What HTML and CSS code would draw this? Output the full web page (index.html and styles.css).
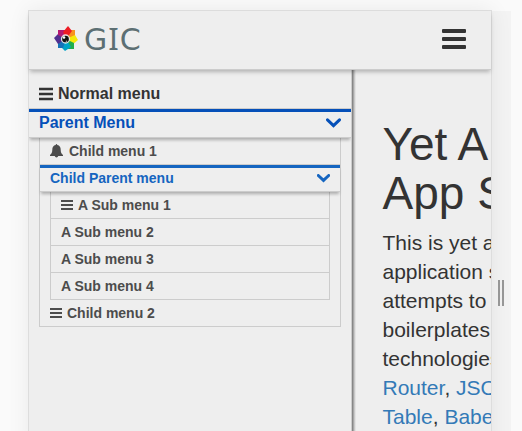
FILE: index.html
```
<!DOCTYPE html>
<html lang="en">
<head>
<meta charset="utf-8">
<title>GIC</title>
<link rel="stylesheet" href="styles.css">
</head>
<body>
<div class="stage">
  <div class="device">
    <header class="header">
      <a class="brand">
        <svg class="logo" width="25" height="26" viewBox="0 0 25 26">
          <path fill="#f7931e" d="M13 13l3-9h6v6z"/>
          <path fill="#f5e90a" d="M13 13l9-4 3 5-6 5z"/>
          <path fill="#1fad4b" d="M13 13l8 4v6h-7z"/>
          <path fill="#00a3c7" d="M13 13l5 8-6 4-5-5z"/>
          <path fill="#1672b8" d="M13 13l-3 9H5v-6z"/>
          <path fill="#50308f" d="M13 13l-8 5-4-6 5-5z"/>
          <path fill="#b51873" d="M13 13L5 9V4h7z"/>
          <path fill="#ed1c24" d="M13 13L10 6l5-6 4 5z"/>
          <circle cx="12.500" cy="13" r="4" fill="#111" stroke="#fff" stroke-opacity=".85" stroke-width="1.300"/>
          <circle cx="11" cy="11.500" r="1.300" fill="#fff"/><circle cx="13.500" cy="15.200" r=".8" fill="#aaa"/>
        </svg>
        <span class="brand-name">G<span class="serifed">I</span>C</span>
      </a>
      <span class="toggle"><i></i><i></i><i></i></span>
    </header>
    <div class="body">
      <nav class="sidebar">
        <div class="item item-top"><svg class="bars" width="14" height="12" viewBox="0 0 14 12"><path d="M0 1h14M0 6h14M0 11h14"/></svg>Normal menu</div>
        <div class="parent"><span>Parent Menu</span><svg class="chevron" width="15" height="10" viewBox="0 0 15 10"><path d="M1.500 1.800l6 5.800 6-5.800"/></svg></div>
        <div class="level">
          <div class="item item-first"><svg class="bell" width="13" height="14" viewBox="0 0 13 14"><path d="M5.700 1c0-1.300 1.600-1.300 1.600 0 2.500.5 3.400 2.300 3.400 4.700 0 2.700.8 4.100 2.300 5.300v1H8.200c-.2 1.900-3.200 1.900-3.400 0H0v-1c1.500-1.200 2.300-2.600 2.300-5.300C2.300 3.300 3.200 1.500 5.700 1z"/></svg>Child menu 1</div>
          <div class="parent parent-child"><span>Child Parent menu</span><svg class="chevron" width="13" height="9" viewBox="0 0 13 9"><path d="M1.300 1.500l5.200 4.900 5.200-4.900"/></svg></div>
          <div class="level level-sub">
            <div class="item"><svg class="bars" width="12" height="10" viewBox="0 0 12 10"><path d="M0 1h12M0 5h12M0 9h12"/></svg>A Sub menu 1</div>
            <div class="item">A Sub menu 2</div>
            <div class="item">A Sub menu 3</div>
            <div class="item">A Sub menu 4</div>
          </div>
          <div class="item item-last"><svg class="bars" width="12" height="10" viewBox="0 0 12 10"><path d="M0 1h12M0 5h12M0 9h12"/></svg>Child menu 2</div>
        </div>
      </nav>
      <main class="content">
        <h1>Yet A<br>App S</h1>
        <p>This is yet a<br>application s<br>attempts to<br>boilerplates<br>technologies<br><a>Router</a>, <a>JSON</a><br><a>Table</a>, <a>Babel</a></p>
      </main>
    </div>
  </div>
  <div class="handle"><i></i><i></i></div>
</div>
</body>
</html>
```
FILE: styles.css
```
* { box-sizing: border-box; }
body {
  margin: 0;
  height: 431px;
  overflow: hidden;
  background: #fafafa;
  color: #333;
  font-family: "Liberation Sans", Arial, sans-serif;
}
.stage { display: flex; height: 431px; padding: 10px 0 0 28px; overflow: hidden; }
.device {
  display: flex;
  flex-direction: column;
  flex: none;
  width: 464px;
  height: 440px;
  border: 1px solid #ddd;
  background: #eee;
  box-shadow: 0 0 20px rgba(0, 0, 0, .07);
  z-index: 1;
}
.header {
  display: flex;
  flex: none;
  align-items: center;
  justify-content: space-between;
  height: 59px;
  padding: 0 25px 0 24px;
  background: #eee;
  border-bottom: 1px solid #ccc;
  box-shadow: 0 3px 4px -1px rgba(0, 0, 0, .25);
  z-index: 2;
}
.brand { display: flex; align-items: center; gap: 6px; }
.logo { margin-top: -2px; }
.brand-name {
  color: #5c6f73;
  font: 30px/40px "DejaVu Sans", Verdana, sans-serif;
}
.serifed { margin: 0 1px; font-family: "Noto Sans", sans-serif; font-size: 31px; line-height: 30px; }
.toggle { display: flex; flex-direction: column; gap: 4px; width: 24px; margin-top: -2px; }
.toggle i { height: 4px; border-radius: 1px; background: #333; }
.body { display: flex; flex: 1; min-height: 0; }
.sidebar {
  flex: none;
  width: 323px;
  border-right: 1px solid #ccc;
  overflow: hidden;
  font-size: 14px;
  font-weight: bold;
}
.item { display: flex; align-items: center; height: 27px; padding: 0 10px; color: #4c4c4c; border-bottom: 1px solid #ccc; }
.item-top { height: 39px; padding-top: 9px; font-size: 16px; color: #333; }
.item-first { padding-bottom: 1px; }
.bars { margin-right: 5px; fill: none; stroke: currentColor; stroke-width: 2; }
.item-top .bars { stroke-width: 2.4; overflow: visible; }
.bell { margin-right: 6px; fill: currentColor; }
.parent {
  position: relative;
  display: flex;
  align-items: center;
  justify-content: space-between;
  height: 29px;
  padding: 0 10px 4px;
  color: #0550b9;
  font-size: 16px;
  border-top: 3px solid #0550b9;
  border-bottom: 1px solid #ccc;
  box-shadow: 0 3px 3px -1px rgba(0, 0, 0, .28);
}
.parent-child { height: 27px; padding-bottom: 3px; font-size: 14px; color: #1565c0; border-top-color: #1565c0; }
.chevron { fill: none; stroke: currentColor; stroke-width: 3; stroke-linecap: round; }
.level { margin: 0 10px; border: 1px solid #ccc; border-top: 0; }
.level-sub { border-bottom: 0; }
.level .item-last { height: 26px; border-bottom: 0; }
.content {
  width: 140px;
  padding: 50px 0 0 30.5px;
  overflow: hidden;
  white-space: nowrap;
  background: linear-gradient(to right, #868686 1px, #a6a6a6 1px 2px, #c8c8c8 2px 3px, #e2e2e2 3px 4px, #eee 4px);
}
h1 { margin: 0 0 10px; font-size: 46px; font-weight: 500; line-height: 49px; }
p { margin: 0; font-size: 21px; line-height: 29px; }
p a { color: #337ab7; }
.handle { display: flex; gap: 2px; width: 19px; height: 440px; margin-top: 1px; padding: 269px 0 0 6px; background: #f3f3f3; }
.handle i { width: 2px; height: 26px; background: #999; }
```
